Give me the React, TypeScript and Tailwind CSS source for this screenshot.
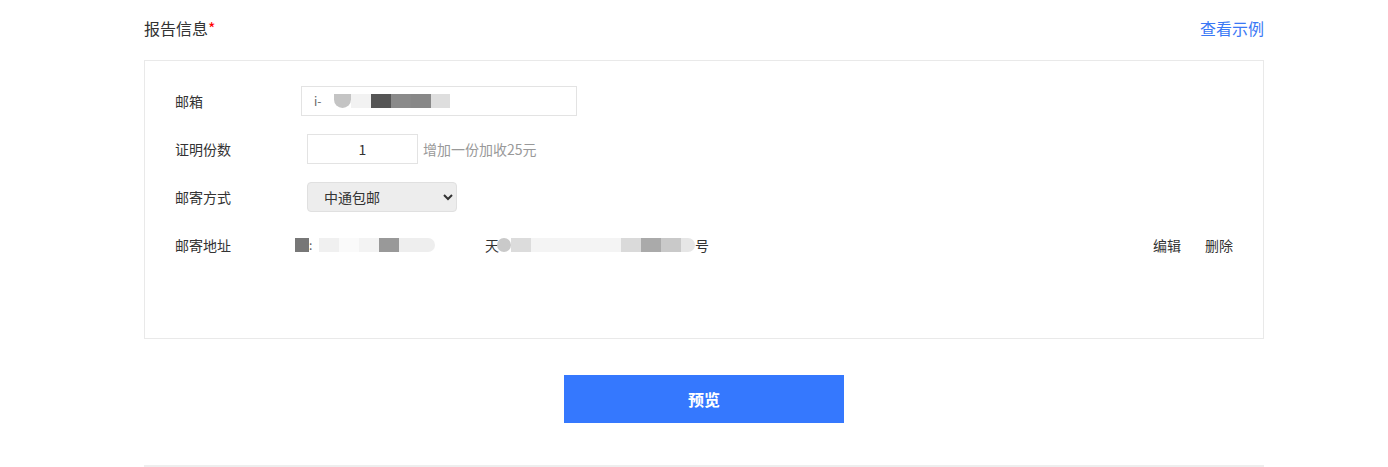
import React from "react";

const font = { fontFamily: '"Noto Sans CJK SC", "Noto Sans", sans-serif' };

const App = () => {
  return (
    <div className="w-[1388px] h-[467px] bg-white text-[#333]" style={font}>
      <div className="w-[1120px] ml-[144px]">
        <div className="flex items-center justify-between h-[60px] pb-[4px]">
          <h2 className="text-[16px] text-[#333]">
            报告信息<span className="text-[#f00]">*</span>
          </h2>
          <a className="text-[16px] text-[#3a78f5] cursor-pointer">查看示例</a>
        </div>

        <div className="border border-[#e9e9e9] h-[279px] pl-[30px] pr-[30px] pt-[25px]">
          <div className="flex items-center h-[30px]">
            <label className="w-[126px] text-[14px]">邮箱</label>
            <div className="w-[276px] h-[30px] border border-[#e3e3e3] flex items-center pl-[12px]">
              <span className="text-[12px] text-[#666] w-[20px]">i-</span>
              <span className="w-[17px] h-[14px] bg-[#c4c4c4] rounded-b-full" />
              <span className="w-[20px] h-[14px] bg-[#f2f2f2]" />
              <span className="w-[20px] h-[14px] bg-[#555]" />
              <span className="w-[20px] h-[14px] bg-[#8a8a8a]" />
              <span className="w-[20px] h-[14px] bg-[#888]" />
              <span className="w-[19px] h-[14px] bg-[#dedede]" />
            </div>
          </div>

          <div className="flex items-center h-[30px] mt-[18px]">
            <label className="w-[132px] text-[14px]">证明份数</label>
            <input
              defaultValue="1"
              className="w-[111px] h-[30px] border border-[#e3e3e3] text-center text-[14px] outline-none"
            />
            <span className="ml-[5px] text-[14px] text-[#999]">增加一份加收25元</span>
          </div>

          <div className="flex items-center h-[30px] mt-[18px]">
            <label className="w-[132px] text-[14px]">邮寄方式</label>
            <select className="w-[150px] h-[30px] bg-[#ededed] rounded-[4px] border border-[#e0e0e0] pl-[12px] text-[14px] text-[#333]">
              <option>中通包邮</option>
            </select>
          </div>

          <div className="flex items-center h-[30px] mt-[18px]">
            <label className="w-[120px] text-[14px]">邮寄地址</label>
            <div className="flex items-center w-[190px] h-[14px]">
              <span className="w-[14px] h-[14px] bg-[#777]" />
              <span className="text-[12px] text-[#555] w-[10px]">:</span>
              <span className="w-[20px] h-[14px] bg-[#f0f0f0]" />
              <span className="w-[20px] h-[14px] bg-[#fafafa]" />
              <span className="w-[20px] h-[14px] bg-[#f3f3f3]" />
              <span className="w-[20px] h-[14px] bg-[#999]" />
              <span className="w-[36px] h-[14px] bg-[#eeeeee] rounded-r-full" />
            </div>
            <div className="flex items-center text-[14px]">
              <span>天</span>
              <span className="w-[14px] h-[14px] bg-[#c9c9c9] rounded-full -ml-[2px]" />
              <span className="w-[20px] h-[14px] bg-[#dcdcdc]" />
              <span className="w-[90px] h-[14px] bg-[#f4f4f4]" />
              <span className="w-[20px] h-[14px] bg-[#dadada]" />
              <span className="w-[20px] h-[14px] bg-[#aaa]" />
              <span className="w-[20px] h-[14px] bg-[#c9c9c9]" />
              <span className="w-[14px] h-[14px] bg-[#e6e6e6] rounded-r-full" />
              <span>号</span>
            </div>
            <div className="ml-auto flex gap-[24px] text-[14px]">
              <a className="cursor-pointer">编辑</a>
              <a className="cursor-pointer">删除</a>
            </div>
          </div>
        </div>

        <div className="flex justify-center pt-[36px] pb-[42px]">
          <button className="w-[280px] h-[48px] bg-[#3578fe] text-white text-[16px] font-bold">
            预览
          </button>
        </div>
        <div className="h-[2px] bg-[#eeeeee]" />
      </div>
    </div>
  );
};

export default App;
